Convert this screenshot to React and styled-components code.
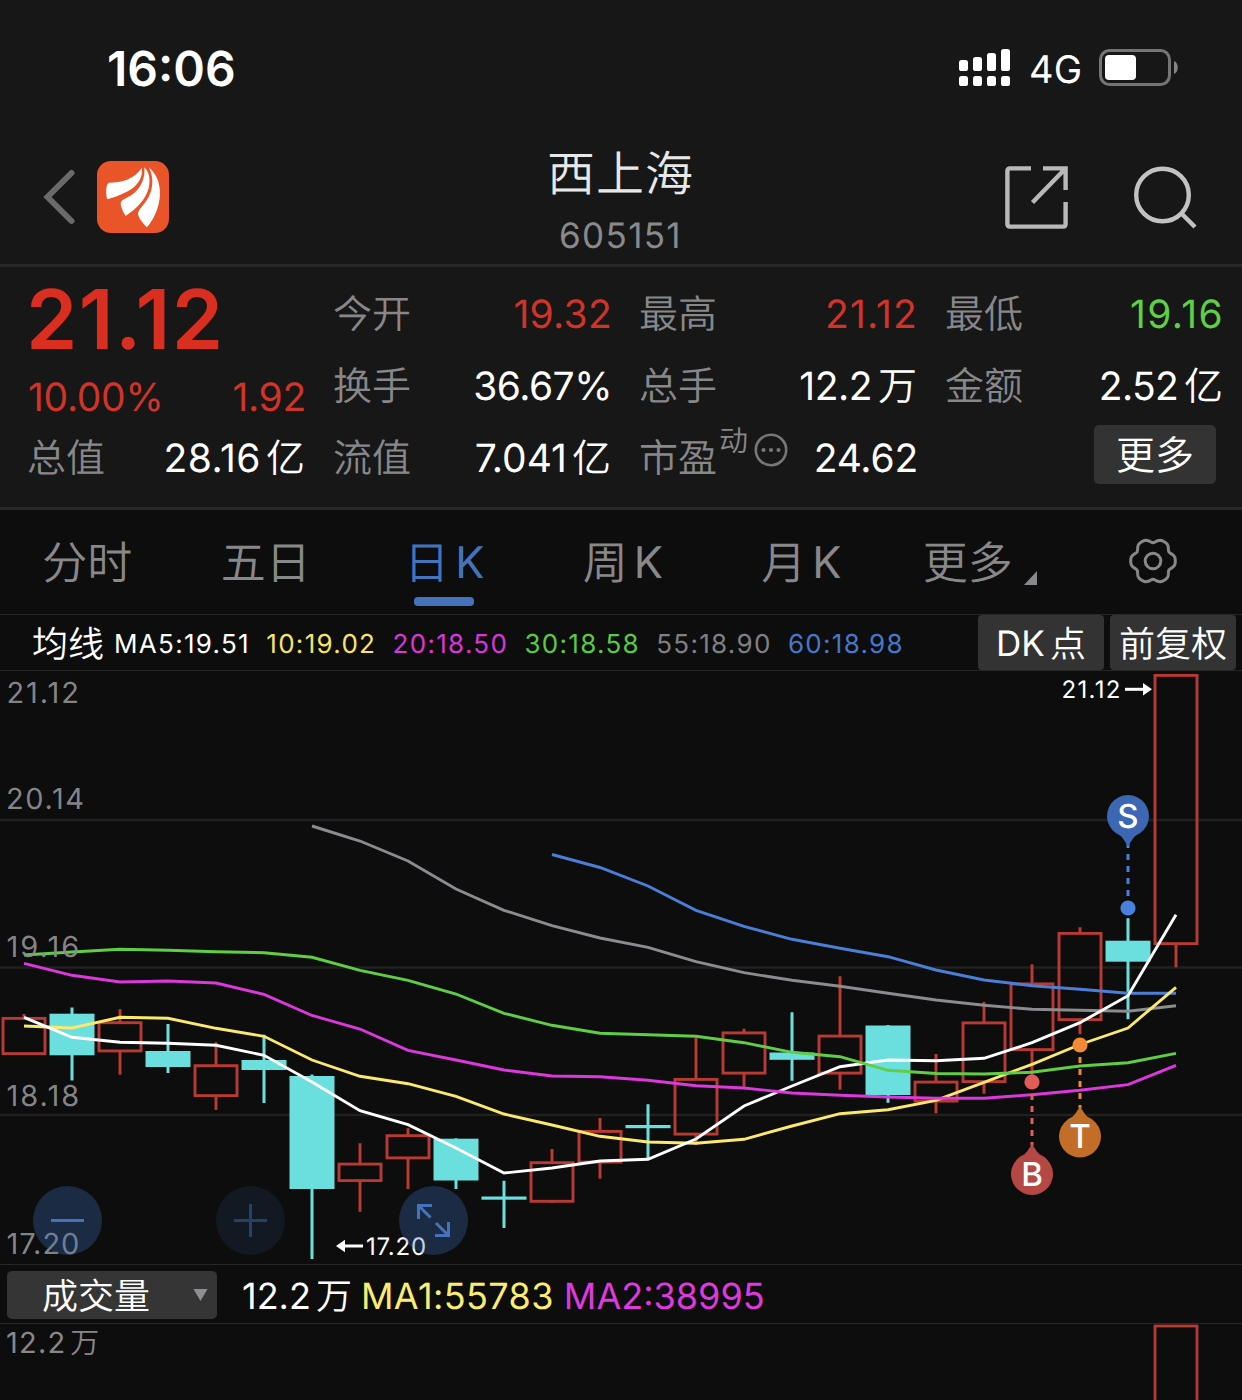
import React from 'react'
import styled, { createGlobalStyle } from 'styled-components'

const GlobalStyle = createGlobalStyle`
*{
box-sizing: border-box;
}
body{
margin: 0;
background-color: #0d0d0d;
font-family: Inter, 'Noto Sans CJK SC', sans-serif;
text-rendering: geometricPrecision;
}
`
const Container = styled.div`
width: 1242px;
height: 1400px;
overflow: hidden;
background-color: #0d0d0d;
color: white;
`

/* header */
const Header = styled.div`
height: 267px;
background-color: #171717;
border-bottom: 3px solid #272727;
`
const StatusBar = styled.div`
height: 136px;
padding: 0 63px 0 107px;
display: flex;
align-items: center;
justify-content: space-between;
`
const Clock = styled.div`
font-size: 48px;
font-weight: 600;
`
const StatusRight = styled.div`
display: flex;
align-items: center;
margin-bottom: 2px;
`
const Network = styled.div`
font-size: 38px;
font-weight: 430;
line-height: 46px;
margin: 5px 17px 0 18px;
`
const Nav = styled.div`
height: 122px;
padding: 0 45px 0 43px;
display: grid;
grid-template-columns: 1fr auto 1fr;
align-items: center;
`
const NavLeft = styled.div`
display: flex;
align-items: center;
gap: 22px;
`
const NavRight = styled.div`
display: flex;
align-items: center;
justify-content: flex-end;
gap: 64px;
padding-top: 1px;
`
const Title = styled.div`
text-align: center;
padding: 8px 0 0 1px;
`
const StockName = styled.div`
font-size: 48px;
font-weight: 350;
letter-spacing: 1px;
line-height: 56px;
color: #e8e8e8;
`
const StockCode = styled.div`
font-size: 35px;
letter-spacing: 1.35px;
line-height: 40px;
margin-top: 14px;
color: #8a8a8e;
`

/* quote panel */
const Quote = styled.div`
height: 243px;
padding: 12px 18px 0 28px;
display: grid;
grid-template-columns: repeat(4, 278px);
column-gap: 28px;
background-color: #171717;
border-bottom: 3px solid #272727;
`
const Column = styled.div`
display: flex;
flex-direction: column;
`
const Price = styled.div`
height: 83px;
line-height: 81px;
margin-left: -2px;
font-size: 82.5px;
font-weight: 600;
letter-spacing: 1.4px;
color: #d92e20;
`
const Change = styled.div`
height: 61px;
padding-top: 11px;
display: flex;
justify-content: space-between;
font-size: 39px;
line-height: 49px;
letter-spacing: -0.3px;
color: #d03428;
`
const Stat = styled.div`
height: 72px;
display: flex;
align-items: center;
font-size: 39px;
line-height: 48px;
`
const Label = styled.div`
font-weight: 350;
margin: 0 1px 0 -1px;
color: #88888b;
`
const Value = styled.div`
margin-left: auto;
letter-spacing: ${p => p.$ls || 0}px;
color: ${p => p.color || 'white'};
`
const Unit = styled.span`
font-weight: 350;
margin-left: ${p => p.$gap || 5}px;
margin-right: 1px;
letter-spacing: 0;
`
const Sup = styled.div`
font-size: 29px;
font-weight: 350;
line-height: 34px;
margin: -36px 6px 0 1px;
color: #88888b;
`
const DotsIcon = styled.svg`
margin-top: -18px;
`
const MoreButton = styled.button`
width: 122px;
height: 59px;
margin: 2px 8px 0 auto;
padding: 0;
border: none;
border-radius: 5px;
background-color: #333333;
color: white;
font-family: inherit;
font-size: 39px;
font-weight: 350;
line-height: 59px;
cursor: pointer;
`

/* period tabs */
const Tabs = styled.div`
height: 105px;
margin-left: -2px;
display: grid;
grid-template-columns: repeat(6, 178.5px) 1fr;
border-bottom: 1px solid #262626;
`
const Tab = styled.div`
position: relative;
display: flex;
align-items: center;
justify-content: center;
padding-top: 2px;
font-size: 45px;
line-height: 60px;
font-weight: 350;
color: ${p => p.$active ? '#4472bb' : '#88888b'};
cursor: pointer;
&::after{
content: '';
display: ${p => p.$active ? 'block' : 'none'};
position: absolute;
left: 59px;
bottom: 8px;
width: 60px;
height: 9px;
border-radius: 4px;
background-color: #4472bb;
}
`
const SettingsTab = styled(Tab)`
padding: 0 5px 2px 0;
`
const Latin = styled.span`
font-size: 43.5px;
font-weight: 390;
margin-left: 6px;
`
const Corner = styled.svg`
margin: 29px 0 0 11px;
`

/* moving averages */
const MaBar = styled.div`
height: 56px;
padding: 0 6px 0 32px;
display: flex;
align-items: center;
border-bottom: 1px solid #262626;
`
const MaTitle = styled.div`
font-size: 36px;
font-weight: 350;
line-height: 54px;
margin: 3px 10px 0 0;
`
const MaItem = styled.div`
font-size: 26px;
letter-spacing: 1.3px;
line-height: 30px;
margin: 4px 16.3px 0 0;
color: ${p => p.color};
`
const MaButtons = styled.div`
margin-left: auto;
display: flex;
gap: 6px;
`
const MaButton = styled.div`
width: 126px;
height: 55px;
padding-top: 3px;
display: flex;
align-items: center;
justify-content: center;
border-radius: 4px;
background-color: #333333;
font-size: 36px;
font-weight: 350;
line-height: 52px;
`
const Dk = styled.span`
font-size: 35px;
font-weight: 400;
margin-right: 5px;
`

/* charts */
const ChartPanel = styled.div`
position: relative;
height: 594px;
border-bottom: 1px solid #262626;
svg{
display: block;
}
`
const Zoom = styled.div`
position: absolute;
left: 33px;
bottom: 9px;
display: flex;
gap: 114px;
`
const ZoomButton = styled.div`
width: 69px;
height: 69px;
border-radius: 50%;
background-color: rgba(60, 112, 192, ${p => p.$disabled ? 0.12 : 0.31});
`
const VolumeBar = styled.div`
height: 59px;
padding-left: 7px;
display: flex;
align-items: center;
font-size: 36px;
line-height: 48px;
border-bottom: 1px solid #262626;
`
const Select = styled.div`
width: 210px;
height: 48px;
padding: 2px 9px 0 35px;
margin-top: 1px;
display: flex;
align-items: center;
justify-content: space-between;
border-radius: 5px;
background-color: #353535;
font-weight: 350;
svg{
margin-top: -2px;
}
`
const VolumeText = styled.div`
margin: 3px 0 0 ${p => p.$left}px;
letter-spacing: ${p => p.$ls || 0}px;
color: ${p => p.color || 'white'};
`
const VolumePanel = styled.div`
height: 76px;
display: flex;
justify-content: space-between;
`
const VolumeMax = styled.div`
padding-left: 6px;
font-size: 29px;
line-height: 38px;
letter-spacing: 1.2px;
color: #88888b;
`

const RED = '#b83a32'
const CYAN = '#6adfde'

// up, high, body top, body bottom, low (screen y)
const candles = [
  [1, 1014, 1017, 1055, 1055],
  [0, 1007.5, 1013.7, 1055.3, 1080.5],
  [1, 1009.3, 1021.3, 1052.3, 1074.7],
  [0, 1024, 1051, 1067, 1073],
  [1, 1042.3, 1064.3, 1097, 1110],
  [0, 1034.7, 1060, 1070, 1103],
  [0, 1074.5, 1076, 1189, 1259],
  [1, 1143.3, 1162.7, 1182, 1211.7],
  [1, 1128.3, 1134.3, 1159.3, 1189],
  [0, 1138.3, 1138.7, 1180.5, 1189],
  [0, 1180.7, 1196.5, 1199.7, 1228],
  [1, 1149, 1161.3, 1202.7, 1202.7],
  [1, 1118, 1130, 1163.5, 1178.7],
  [0, 1104.3, 1125, 1128.2, 1158.7],
  [1, 1038, 1078, 1135.5, 1145],
  [1, 1028.7, 1031.5, 1074.5, 1086.7],
  [0, 1012.3, 1052.5, 1059.8, 1080.7],
  [1, 976.3, 1034.7, 1074.5, 1089.7],
  [0, 1025, 1025.5, 1095, 1102.7],
  [1, 1054, 1080.7, 1102.5, 1113.3],
  [1, 1002, 1021.5, 1083, 1093.7],
  [1, 964.3, 982.5, 1051, 1077],
  [1, 927.3, 932, 1021, 1034.3],
  [0, 918.3, 940.7, 961.7, 1019.3],
  [1, 674, 674, 945, 967.3],
]

const lines = [
  { color: '#8c8c90', start: 6, ys: [826, 841, 861, 889, 910.3, 925.7, 938, 947.3, 961.7, 972.7, 980.3, 986.3, 993.3, 1000, 1005.3, 1009.3, 1010.3, 1011.3, 1005.7] },
  { color: '#4a7fd8', start: 11, ys: [854.5, 867.5, 886, 910.3, 926.3, 939.3, 948.3, 956.7, 970, 980, 985.7, 989.3, 993.3, 993.3] },
  { color: '#fbe96f', start: 0, ys: [1026, 1028, 1017.3, 1018.3, 1028.3, 1036.3, 1060, 1076.3, 1083.7, 1096.3, 1114, 1125, 1136.3, 1142, 1143.3, 1139.3, 1126, 1113.7, 1109.7, 1100.3, 1082.3, 1064.3, 1044.5, 1028, 987.3] },
  { color: '#fff', start: 0, ys: [1017.3, 1037.3, 1042.3, 1043.3, 1045.3, 1055.3, 1082, 1110.7, 1124.7, 1148, 1173, 1168, 1161, 1159.3, 1139, 1106, 1086, 1066.7, 1060, 1060.7, 1058.3, 1042.7, 1022.7, 995.7, 914.7] },
  { color: '#60ce45', start: 0, ys: [955, 952, 949.3, 950.2, 951.7, 952.7, 957.3, 970.3, 980.3, 994, 1013.3, 1025.3, 1033.3, 1034.7, 1036.3, 1042.7, 1052.3, 1056.7, 1070.3, 1073.5, 1074, 1072.3, 1066, 1062.7, 1053.3] },
  { color: '#dc38dc', start: 0, ys: [963.3, 975.3, 982, 981, 983, 994.3, 1015.5, 1029, 1050.3, 1060, 1070, 1076, 1076.7, 1080.3, 1085.7, 1088, 1093, 1095.3, 1097, 1098.3, 1098.3, 1094.7, 1090.3, 1084.7, 1065.3] },
]

// label, baseline, letter spacing, x
const axis = [
  ['21.12', 703, 1.9, 6.5],
  ['20.14', 809, 1.6, 6],
  ['19.16', 957, 2, 6.5],
  ['18.18', 1106, 2, 6.5],
  ['17.20', 1254, 1, 6.5],
]

const gear = Array.from({ length: 72 }, (_, i) => {
  const a = i * 5 * Math.PI / 180
  const r = 20.8 + 2 * Math.cos(6 * a) - 0.5 * Math.cos(12 * a)
  return `${(25 + r * Math.cos(a)).toFixed(2)},${(25 + r * Math.sin(a)).toFixed(2)}`
}).join(' ')

const Candle = ({ x, data }) => {
  const [up, high, top, bottom, low] = data
  const color = up ? RED : CYAN
  return (
    <g>
      <path d={`M${x} ${high}V${top + 1}M${x} ${bottom - 1}V${low}`} stroke={color} strokeWidth="3" />
      {up
        ? <rect x={x - 21} y={top + 1.4} width="42" height={bottom - top - 2.8} fill="none" stroke={color} strokeWidth="2.9" />
        : <rect x={x - 22.5} y={top} width="45" height={bottom - top} fill={color} />}
    </g>
  )
}

const Marker = ({ x, y, dotY, from, to, letter, color, dotColor, down }) => (
  <g>
    <path d={`M${x} ${from}V${to}`} stroke={dotColor} strokeWidth="3" strokeDasharray="6 6" />
    <circle cx={x} cy={dotY} r="7.6" fill={dotColor} />
    <path
      transform={`translate(${x} ${y})${down ? '' : ' scale(1 -1)'}`}
      d="M-8 19.4A21 21 0 1 1 8 19.4C6 20.5 4 24 0 30C-4 24 -6 20.5 -8 19.4Z"
      fill={color}
    />
    <text x={x} y={y + 11.8} textAnchor="middle" fontSize="33" fontWeight="500" fill="#fff">{letter}</text>
  </g>
)

const KChart = () => (
  <svg width="1242" height="593" viewBox="0 671 1242 593">
    <path d="M0 820H1242M0 967.5H1242M0 1115H1242" stroke="#202020" strokeWidth="2.4" />
    {candles.map((c, i) => <Candle key={i} x={24 + i * 48} data={c} />)}
    {lines.map(l => (
      <polyline
        key={l.color}
        points={l.ys.map((y, i) => `${24 + (l.start + i) * 48},${y}`).join(' ')}
        fill="none"
        stroke={l.color}
        strokeWidth="2.9"
      />
    ))}
    {axis.map(([t, y, ls, x]) => <text key={t} x={x} y={y} fontSize="29" letterSpacing={ls} fill="#8c8c90" fillOpacity="0.95">{t}</text>)}
    <text x="1061.5" y="698.3" fontSize="24" letterSpacing="1.3" fill="#fff">21.12</text>
    <path d="M1125 689.3H1145" stroke="#fff" strokeWidth="3" />
    <path d="M1143 683L1152 689.3L1143 695.5Z" fill="#fff" />
    <text x="366" y="1255" fontSize="24" letterSpacing="0.75" fill="#fff">17.20</text>
    <path d="M363 1246H343" stroke="#fff" strokeWidth="3" />
    <path d="M345 1239.7L336 1246L345 1252.3Z" fill="#fff" />
    <Marker x={1128} y={816} dotY={908} from={842} to={898} letter="S" color="#3b67b3" dotColor="#4a80dd" down />
    <Marker x={1080} y={1136.5} dotY={1045} from={1057} to={1108} letter="T" color="#c26e28" dotColor="#f08a36" />
    <Marker x={1032} y={1174} dotY={1082} from={1094} to={1146} letter="B" color="#b54844" dotColor="#e05d58" />
  </svg>
)

const Signal = () => (
  <svg width="52" height="37" viewBox="0 0 52 37" fill="#fff">
    {[11, 8, 4, 0].map((y, i) => (
      <g key={i}>
        <rect x={i * 14} y={y} width="9" height={22 - y} rx="2.6" />
        <rect x={i * 14} y="27" width="9" height="10" rx="2.6" />
      </g>
    ))}
  </svg>
)

const Battery = () => (
  <svg width="80" height="37" viewBox="0 0 80 37">
    <rect x="1.5" y="1.5" width="69" height="34" rx="9" fill="none" stroke="#757575" strokeWidth="3" />
    <rect x="6" y="6" width="31" height="25" rx="4" fill="#fff" />
    <path d="M75 12C80 14 80 23 75 25Z" fill="#858585" />
  </svg>
)

const Logo = () => (
  <svg width="72" height="72" viewBox="291 423 216 216">
    <rect x="291" y="423" width="216" height="216" rx="42" fill="#ea5429" />
    <g fill="#fff">
      <path d="M326 488C365 488 406 476 425 443C430 474 412 497 385 513C365 524 340 533 322 538C317 520 317 497 326 488Z" />
      <path d="M433 442C448 458 452 478 446 505C436 540 410 566 377 588C370 577 362 562 362 550C363 537 385 534 402 520C424 500 436 475 433 442Z" />
      <path d="M446 442C470 462 480 490 480 522C479 560 462 598 441 622C428 610 414 592 414 580C416 566 440 548 450 522C460 496 460 468 446 442Z" />
    </g>
  </svg>
)

const App = () => {
  return (
    <Container>
      <GlobalStyle />
      <Header>
        <StatusBar>
          <Clock>16:06</Clock>
          <StatusRight>
            <Signal />
            <Network>4G</Network>
            <Battery />
          </StatusRight>
        </StatusBar>
        <Nav>
          <NavLeft>
            <svg width="32" height="56" viewBox="0 0 32 56">
              <path d="M28.5 4L4.5 28L28.5 52" fill="none" stroke="#6a6a6a" strokeWidth="6" strokeLinecap="round" />
            </svg>
            <Logo />
          </NavLeft>
          <Title>
            <StockName>西上海</StockName>
            <StockCode>605151</StockCode>
          </Title>
          <NavRight>
            <svg width="64" height="64" viewBox="0 0 64 64" fill="none" stroke="#b9b9b9" strokeWidth="4.4">
              <path d="M26 2.4H5Q2.4 2.4 2.4 5V58Q2.4 60.6 5 60.6H58Q60.6 60.6 60.6 58V36" />
              <path d="M38 2.4H60.6V24M60 3L27.5 36.5" />
            </svg>
            <svg width="64" height="64" viewBox="0 0 64 64" fill="none" stroke="#c2c2c2" strokeWidth="4.4">
              <circle cx="29.5" cy="29" r="26.3" />
              <path d="M48.5 47.5L62 61" />
            </svg>
          </NavRight>
        </Nav>
      </Header>

      <Quote>
        <Column>
          <Price>21.12</Price>
          <Change>
            <span>10.00%</span>
            <span>1.92</span>
          </Change>
          <Stat><Label>总值</Label><Value $ls={0.5}>28.16<Unit>亿</Unit></Value></Stat>
        </Column>
        <Column>
          <Stat><Label>今开</Label><Value color="#d03428" $ls={0.3}>19.32</Value></Stat>
          <Stat><Label>换手</Label><Value $ls={-0.5}>36.67%</Value></Stat>
          <Stat><Label>流值</Label><Value>7.041<Unit>亿</Unit></Value></Stat>
        </Column>
        <Column>
          <Stat><Label>最高</Label><Value color="#d03428" $ls={1.15}>21.12</Value></Stat>
          <Stat><Label>总手</Label><Value $ls={-0.5}>12.2<Unit $gap={6}>万</Unit></Value></Stat>
          <Stat>
            <Label>市盈</Label>
            <Sup>动</Sup>
            <DotsIcon width="34" height="34" viewBox="0 0 34 34" fill="#77777a">
              <circle cx="17" cy="17" r="15.2" fill="none" stroke="#77777a" strokeWidth="2.6" />
              <circle cx="9.5" cy="17" r="2.1" />
              <circle cx="17" cy="17" r="2.1" />
              <circle cx="24.5" cy="17" r="2.1" />
            </DotsIcon>
            <Value $ls={-0.2}>24.62</Value>
          </Stat>
        </Column>
        <Column>
          <Stat><Label>最低</Label><Value color="#5fd045" $ls={1.4}>19.16</Value></Stat>
          <Stat><Label>金额</Label><Value $ls={-0.7}>2.52<Unit $gap={6}>亿</Unit></Value></Stat>
          <MoreButton>更多</MoreButton>
        </Column>
      </Quote>

      <Tabs>
        <Tab>分时</Tab>
        <Tab>五日</Tab>
        <Tab $active>日<Latin>K</Latin></Tab>
        <Tab>周<Latin>K</Latin></Tab>
        <Tab>月<Latin>K</Latin></Tab>
        <Tab>
          更多
          <Corner width="13" height="14" viewBox="0 0 13 14"><path d="M13 0V14H0Z" fill="#88888b" /></Corner>
        </Tab>
        <SettingsTab>
          <svg width="50" height="50" viewBox="0 0 50 50" fill="none" stroke="#88888b" strokeWidth="3">
            <polygon points={gear} strokeLinejoin="round" />
            <circle cx="25" cy="25" r="7.8" />
          </svg>
        </SettingsTab>
      </Tabs>

      <MaBar>
        <MaTitle>均线</MaTitle>
        <MaItem color="#fff">MA5:19.51</MaItem>
        <MaItem color="#f5e468">10:19.02</MaItem>
        <MaItem color="#d836d8">20:18.50</MaItem>
        <MaItem color="#5cc843">30:18.58</MaItem>
        <MaItem color="#808083">55:18.90</MaItem>
        <MaItem color="#4777c9">60:18.98</MaItem>
        <MaButtons>
          <MaButton><Dk>DK</Dk>点</MaButton>
          <MaButton>前复权</MaButton>
        </MaButtons>
      </MaBar>

      <ChartPanel>
        <KChart />
        <Zoom>
          <ZoomButton>
            <svg width="69" height="69" viewBox="0 0 69 69"><path d="M18 34.5H51" stroke="#4472bd" strokeWidth="3" /></svg>
          </ZoomButton>
          <ZoomButton $disabled>
            <svg width="69" height="69" viewBox="0 0 69 69"><path d="M18 34.5H51M34.5 18V51" stroke="#27406a" strokeWidth="3" /></svg>
          </ZoomButton>
          <ZoomButton>
            <svg width="69" height="69" viewBox="0 0 69 69" fill="none" stroke="#4472bd" strokeWidth="3">
              <path d="M33 19.5H19.5V33M19.5 19.5L31.5 31.5" />
              <path d="M36 49.5H49.5V36M49.5 49.5L37 37" />
            </svg>
          </ZoomButton>
        </Zoom>
      </ChartPanel>

      <VolumeBar>
        <Select>
          成交量
          <svg width="15" height="12" viewBox="0 0 15 12"><path d="M0.5 0H14.5L7.5 12Z" fill="#8e8e93" /></svg>
        </Select>
        <VolumeText $left={25}>12.2<Unit>万</Unit></VolumeText>
        <VolumeText $left={8} $ls={0.4} color="#fbec72">MA1:55783</VolumeText>
        <VolumeText $left={10} color="#dd3add">MA2:38995</VolumeText>
      </VolumeBar>
      <VolumePanel>
        <VolumeMax>12.2<Unit $gap={4}>万</Unit></VolumeMax>
        <svg width="89" height="76" viewBox="1153 1324 89 76">
          <rect x="1155" y="1326" width="42" height="90" fill="none" stroke={RED} strokeWidth="2.8" />
        </svg>
      </VolumePanel>
    </Container>
  )
}
export default App
